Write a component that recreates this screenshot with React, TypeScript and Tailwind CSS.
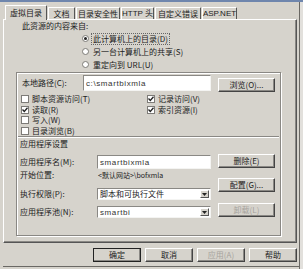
import React from "react";

const cjk = "font-['Noto_Sans_CJK_SC','Noto_Sans',sans-serif]";
const lat = "font-['Liberation_Sans','Noto_Sans_CJK_SC',sans-serif]";

function Btn({ children, w = "w-[57px]", h = "h-[14px]", disabled = false, def = false }: { children: React.ReactNode; w?: string; h?: string; disabled?: boolean; def?: boolean }) {
  return (
    <div
      className={`${w} ${h} flex items-center justify-center bg-[#d6d3cc] border ${def ? "border-[#222]" : "border-t-[#fff] border-l-[#fff] border-r-[#444] border-b-[#444]"} shadow-[inset_-1px_-1px_0_#8a8884] ${disabled ? "text-[#a6a39d]" : "text-[#222]"}`}
    >
      {children}
    </div>
  );
}

function Radio({ on, children }: { on?: boolean; children: React.ReactNode }) {
  return (
    <div className="h-[13px] flex items-center">
      <div className="w-[7px] h-[7px] rounded-full bg-white border border-[#7d7b77] flex items-center justify-center">
        {on && <div className="w-[3px] h-[3px] rounded-full bg-[#222]" />}
      </div>
      <div className={`ml-[2px] px-[1px] leading-[10px] ${on ? "border border-dotted border-[#666]" : "border border-transparent"}`}>{children}</div>
    </div>
  );
}

function Check({ on, children }: { on?: boolean; children: React.ReactNode }) {
  return (
    <div className="h-[10.5px] flex items-center">
      <div className="w-[8px] h-[8px] bg-white border border-[#7d7b77] flex items-center justify-center">
        {on && (
          <svg width="6" height="6" viewBox="0 0 6 6">
            <path d="M0.5 2.5 L2.3 4.5 L5.5 0.8" stroke="#222" strokeWidth="1.3" fill="none" />
          </svg>
        )}
      </div>
      <div className="ml-[3px] leading-[10px]">{children}</div>
    </div>
  );
}

function Input({ w, h, children, select = false }: { w: string; h: string; children?: React.ReactNode; select?: boolean }) {
  return (
    <div className={`${w} ${h} bg-white border border-t-[#8a8884] border-l-[#8a8884] border-r-[#f4f4f2] border-b-[#f4f4f2] flex items-center`}>
      <div className="flex-1 pl-[2px] leading-[10px] overflow-hidden whitespace-nowrap">{children}</div>
      {select && (
        <div className="w-[9px] h-[8px] mr-[1px] bg-[#d6d3cc] border border-t-[#fff] border-l-[#fff] border-r-[#555] border-b-[#555] flex items-center justify-center">
          <svg width="5" height="3" viewBox="0 0 5 3">
            <path d="M0 0 H5 L2.5 3 Z" fill="#222" />
          </svg>
        </div>
      )}
    </div>
  );
}

function Tab({ w, active = false, children }: { w: string; active?: boolean; children: React.ReactNode }) {
  return (
    <div
      className={`${w} ${active ? "h-[15px] -mb-[1px] relative z-10 bg-[#d6d3cc]" : "h-[12px]"} flex items-center justify-center border-l border-t border-r border-l-[#fff] border-t-[#fff] border-r-[#555] rounded-t-[1px] whitespace-nowrap`}
    >
      {children}
    </div>
  );
}

export default function App() {
  return (
    <div className={`w-[303px] h-[269px] bg-[#d6d3cc] overflow-hidden flex flex-col text-[8px] text-[#222] ${cjk}`}>
      <div className="h-[2px] bg-[#6f86ad]" />
      <div className="flex flex-1">
        <div className="w-[300px] flex flex-col border-r border-[#6a6864] pl-[3px]">
          {/* tabs */}
          <div className="h-[17px] flex items-end pl-[2px] gap-[1px]">
            <Tab w="w-[42px]" active>虚拟目录</Tab>
            <Tab w="w-[27px]">文档</Tab>
            <Tab w="w-[44px]">目录安全性</Tab>
            <Tab w="w-[33px]"><span className={lat}>HTTP 头</span></Tab>
            <Tab w="w-[46px]">自定义错误</Tab>
            <Tab w="w-[35px]"><span className={lat}>ASP.NET</span></Tab>
          </div>
          {/* panel */}
          <div className="w-[294px] h-[224px] border border-t-[#fff] border-l-[#fff] border-r-[#555] border-b-[#555] shadow-[inset_-1px_-1px_0_#8a8884] flex flex-col">
            <div className="pl-[18px] h-[10px] leading-[10px] mt-[1px]">此资源的内容来自:</div>
            <div className="pl-[78px] mt-[1px] flex flex-col">
              <Radio on>此计算机上的目录(D)</Radio>
              <Radio>另一台计算机上的共享(S)</Radio>
              <Radio>重定向到 URL(U)</Radio>
            </div>
            {/* group box */}
            <div className="ml-[12px] mt-[1px] w-[265px] h-[164px] border border-[#8a8884] shadow-[inset_1px_1px_0_#fff,1px_1px_0_#fff] flex flex-col">
              <div className="mt-[2px] flex items-center h-[16px]">
                <div className="w-[66px] pl-[5px]">本地路径(C):</div>
                <Input w="w-[128px]" h="h-[16px]">
                  <span className={`${lat} tracking-[0.6px] text-[#333]`}>c:\smartbixmla</span>
                </Input>
                <div className="ml-[7px] mt-[3px]">
                  <Btn>浏览(O)...</Btn>
                </div>
              </div>
              <div className="mt-[3px] flex pl-[4px]">
                <div className="w-[126px] flex flex-col">
                  <Check>脚本资源访问(T)</Check>
                  <Check on>读取(R)</Check>
                  <Check>写入(W)</Check>
                  <Check>目录浏览(B)</Check>
                </div>
                <div className="flex flex-col">
                  <Check on>记录访问(V)</Check>
                  <Check on>索引资源(I)</Check>
                </div>
              </div>
              <div className="h-[2px] mx-[1px] border-t border-[#8a8884] border-b border-b-[#fff]" />
              <div className="pl-[3px] mt-[1px] h-[10px] leading-[10px]">应用程序设置</div>
              <div className="flex mt-[5px]">
                <div className="flex flex-col">
                  <div className="flex items-center h-[14px] mt-[1px]">
                    <div className="w-[80px] pl-[3px]">应用程序名(M):</div>
                    <Input w="w-[114px]" h="h-[14px]">
                      <span className={`${lat} tracking-[0.6px] text-[#333]`}>smartbixmla</span>
                    </Input>
                  </div>
                  <div className="flex items-center h-[10px] mt-[1px]">
                    <div className="w-[80px] pl-[3px]">开始位置:</div>
                    <div className="text-[7px] pl-[1px]">&lt;默认网站&gt;\bofxmla</div>
                  </div>
                  <div className="flex items-center h-[12px] mt-[8px]">
                    <div className="w-[80px] pl-[3px]">执行权限(P):</div>
                    <Input w="w-[114px]" h="h-[12px]" select>脚本和可执行文件</Input>
                  </div>
                  <div className="flex items-center h-[12px] mt-[6px]">
                    <div className="w-[80px] pl-[3px]">应用程序池(N):</div>
                    <Input w="w-[114px]" h="h-[12px]" select>
                      <span className={`${lat} tracking-[0.6px] text-[#333]`}>smartbi</span>
                    </Input>
                  </div>
                </div>
                <div className="ml-[7px] flex flex-col">
                  <Btn>删除(E)</Btn>
                  <div className="mt-[10px]"><Btn>配置(G)...</Btn></div>
                  <div className="mt-[11px]"><Btn disabled>卸载(L)</Btn></div>
                </div>
              </div>
            </div>
          </div>
          {/* bottom buttons */}
          <div className="mt-[5px] flex pl-[90px] gap-[4px]">
            <Btn w="w-[48px]" def>确定</Btn>
            <Btn w="w-[48px]">取消</Btn>
            <Btn w="w-[48px]" disabled>应用(A)</Btn>
            <Btn w="w-[48px]">帮助</Btn>
          </div>
          <div className="mt-[4px] h-[1px] bg-[#6a6864]" />
        </div>
        <div className="flex-1 bg-[#e2e0dc]" />
      </div>
    </div>
  );
}
